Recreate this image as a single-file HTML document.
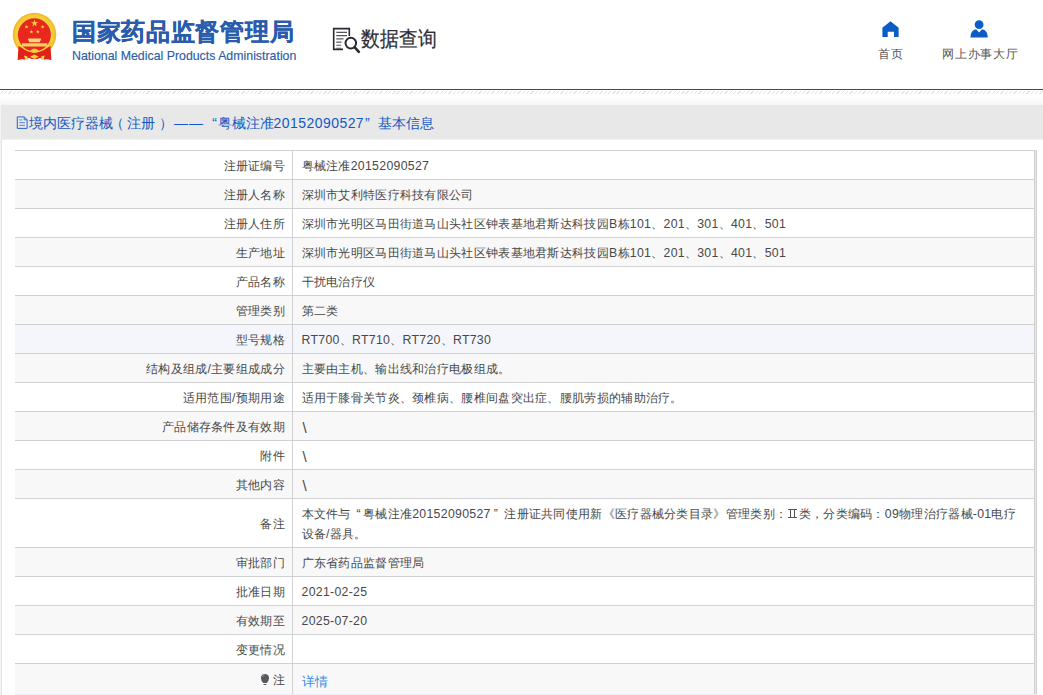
<!DOCTYPE html>
<html><head><meta charset="utf-8">
<style>
*{box-sizing:border-box}
html,body{margin:0;padding:0;background:#fff;width:1043px;height:695px;overflow:hidden}
body{font-family:"Liberation Sans",sans-serif;position:relative;color:#444}
.abs{position:absolute}
#emblem{left:10px;top:11px;width:50px;height:52px}
#t1{left:72px;top:16px;font-size:24px;font-weight:bold;color:#2a5cad;white-space:nowrap;letter-spacing:0.7px;-webkit-text-stroke:0.25px #2a5cad}
#t2{left:72px;top:49px;font-size:12.35px;color:#2a5cad;-webkit-text-stroke:0.15px #2a5cad;white-space:nowrap}
#qicon{left:332px;top:27px;width:30px;height:28px}
#qtext{left:361px;top:25px;font-size:18px;color:#2e2e36;-webkit-text-stroke:0.2px #2e2e36;white-space:nowrap;transform-origin:0 0;transform:scale(1.06,1.18)}
.nav{top:46px;font-size:12.35px;letter-spacing:0.75px;color:#555;white-space:nowrap}
#blue{left:0;top:89px;width:1043px;height:1px;background:#0057c2}
#hatch{left:0;top:90.5px;width:1043px;height:3.5px;background:repeating-linear-gradient(-45deg,#fff 0,#fff 2.1px,#e4e4e4 2.1px,#e4e4e4 3.05px)}
#grad{left:0;top:94px;width:1043px;height:11px;background:linear-gradient(#fff 25%,#f6f6f6)}
#lb0{left:0;top:105px;width:1px;height:590px;background:#f4f4f4}
#lb1{left:1px;top:139px;width:1px;height:556px;background:#e4e4e4}
#phead{left:1px;top:105px;width:1042px;height:34px;background:#e8e8e8}
#phline{left:1px;top:139px;width:1042px;height:1px;background:#eef0f6}
#ptitle{left:29px;top:115px;font-size:14px;color:#1258c4;white-space:nowrap}
#picon{left:16px;top:116px;width:13px;height:14px}
table{position:absolute;left:15px;top:150px;width:1022px;border-collapse:collapse;font-size:12.3px;letter-spacing:0.3px}
td{border-top:1px solid #d1d0d2;padding:0;height:29px;line-height:20px;vertical-align:middle;padding-top:2px}
td.l{width:277px;text-align:right;padding-right:6.5px;color:#484848;border-right:1px solid #d1d0d2}
td.v{padding-left:9px;color:#484848}
tr:nth-child(even) td{background:#f8f8f8}
tr.hov td{background:#f5f6fb}
#rb{left:1034px;top:150px;width:3px;height:545px;border-left:1px solid #cfcfcf;border-right:1px solid #cfcfcf;background:#e6e8f2}
.pl,.pr,.q1,.q2,.dash{display:inline-block}
#ptitle .pl{width:14px;text-indent:-3px}
#ptitle .pr{width:14px;text-indent:4px}
#ptitle .dash{width:34px;text-indent:5px;letter-spacing:1px}
#ptitle .q1{width:14.5px;text-align:right;padding-right:0.5px}
#ptitle .q2{width:14px;text-align:left;padding-left:1px}
.bq1{width:12.3px;text-align:right;padding-right:2px}
.bq2{width:13.5px;text-align:left;padding-left:3px}
.r2{display:inline-block;width:9px;height:9.5px;margin:0 1.5px 0 1px;border-top:1.3px solid #555;border-bottom:1.3px solid #555;background:linear-gradient(90deg,transparent 1.6px,#555 1.6px,#555 2.9px,transparent 2.9px,transparent 6.1px,#555 6.1px,#555 7.4px,transparent 7.4px);vertical-align:0}
.bs{font-size:15px;position:relative;top:1px;left:1px}
#ptitle .dg{letter-spacing:0.45px}
a{color:#3a8ee6;text-decoration:none;font-size:13px;position:relative;top:2px}
</style></head><body>
<svg class="abs" style="left:0;top:0" width="70" height="70" viewBox="0 0 70 70">
  <circle cx="34.5" cy="34.6" r="21.8" fill="#f0bc2c"/>
  <circle cx="34.5" cy="34.6" r="20" fill="#f6ca38"/>
  <path d="M18.5 46 Q34.5 56 50.5 46 L51.4 60.2 Q47 58.5 44.5 59.6 L40 58 Q34.5 60.5 29 58 L24.5 59.6 Q22 58.5 17.6 60.2 Z" fill="#e3211b"/>
  <circle cx="34.4" cy="34.8" r="17.9" fill="#f7d23a"/>
  <circle cx="34.4" cy="34.8" r="16.5" fill="#e8281e"/>
  <polygon points="34.6,19.6 35.5,22.2 38.2,22.2 36,23.8 36.8,26.4 34.6,24.8 32.4,26.4 33.2,23.8 31,22.2 33.7,22.2" fill="#f6cf3c"/>
  <polygon points="26.5,24.9 27.1,26.3 28.5,26.3 27.4,27.2 27.8,28.6 26.5,27.8 25.2,28.6 25.6,27.2 24.5,26.3 25.9,26.3" fill="#f6cf3c"/>
  <polygon points="42.6,24.9 43.2,26.3 44.6,26.3 43.5,27.2 43.9,28.6 42.6,27.8 41.3,28.6 41.7,27.2 40.6,26.3 42,26.3" fill="#f6cf3c"/>
  <polygon points="31.4,29.8 32,31.2 33.4,31.2 32.3,32.1 32.7,33.5 31.4,32.7 30.1,33.5 30.5,32.1 29.4,31.2 30.8,31.2" fill="#f6cf3c"/>
  <polygon points="37.8,29.8 38.4,31.2 39.8,31.2 38.7,32.1 39.1,33.5 37.8,32.7 36.5,33.5 36.9,32.1 35.8,31.2 37.2,31.2" fill="#f6cf3c"/>
  <path d="M28.5 38.4 H40.8 L41.4 40.4 H40 V42.2 H29 V40.4 H27.7 Z" fill="#f8d77a"/>
  <path d="M21.7 43.2 H47.4 L46.8 46.5 H22.3 Z" fill="#f6d35e"/>
  <path d="M30 51.5 Q31.5 48.8 34.5 48.6 Q37.5 48.8 39 51.5 L34.5 53 Z" fill="#f5cd3a"/>
  <path d="M30 56.8 L34.5 54.5 L38.5 56.8 L34.5 59 Z" fill="#f5d040"/>
  <path d="M24 55.5 L27.5 56.5 L27.8 60 L25 59 Z M44.8 55.5 L41.2 56.5 L41 60 L43.8 59 Z" fill="#f5d040"/>
</svg>
<div id="t1" class="abs">国家药品监督管理局</div>
<div id="t2" class="abs">National Medical Products Administration</div>
<svg class="abs" style="left:330px;top:25px" width="32" height="32" viewBox="330 25 32 32">
  <path d="M349.3 36 V28.6 H333.7 V49.4 H343" fill="none" stroke="#2a2a35" stroke-width="1.6"/>
  <path d="M336.3 32.4 H347 M336.3 35.6 H347 M336.3 38.9 H343.5 M336.3 42.1 H341.5 M336.3 45.3 H341 M336.3 48.3 H341" stroke="#55555e" stroke-width="1.1"/>
  <circle cx="350.8" cy="43.1" r="5.3" fill="#fff" stroke="#2a2a35" stroke-width="2"/>
  <path d="M354.6 47.2 L358.8 51.8" stroke="#2a2a35" stroke-width="2.6" stroke-linecap="round"/>
</svg>
<div id="qtext" class="abs">数据查询</div>
<svg class="abs" style="left:880px;top:19px" width="21" height="20" viewBox="880 19 21 20"><path d="M890.5 21.2 L898.6 27.8 V37 H894 V31.7 H887.7 V37 H882.4 V27.8 Z" fill="#0b5cc4"/></svg>
<div class="abs nav" style="left:878px">首页</div>
<svg class="abs" style="left:968px;top:18px" width="22" height="22" viewBox="968 18 22 22"><circle cx="979.1" cy="24.7" r="4.4" fill="#0b5cc4"/><path d="M970.4 37.5 Q970.6 30.2 976.2 29.3 L979.1 32.6 L982 29.3 Q987.6 30.2 987.8 37.5 Z" fill="#0b5cc4"/></svg>
<div class="abs nav" style="left:942px">网上办事大厅</div>
<div id="blue" class="abs"></div>
<div id="hatch" class="abs"></div>
<div id="grad" class="abs"></div>
<div id="lb0" class="abs"></div>
<div id="phead" class="abs"></div>
<div id="phline" class="abs"></div>
<div id="lb1" class="abs"></div>
<svg class="abs" style="left:14px;top:114px" width="16" height="17" viewBox="14 114 16 17"><path d="M17.3 116.9 H24.2 L27.1 119.8 V128.4 H17.3 Z" fill="none" stroke="#2a62c8" stroke-width="1"/><path d="M24.2 116.9 V119.8 H27.1" fill="none" stroke="#2a62c8" stroke-width="0.9"/><path d="M19.3 119.9 H22.2 M19.3 122.6 H25 M19.3 125.3 H25" stroke="#4a7fd6" stroke-width="0.9"/></svg>
<div id="ptitle" class="abs">境内医疗器械<span class="pl">（</span>注册<span class="pr">）</span><span class="dash">——</span><span class="q1">“</span>粤械注准<span class="dg">20152090527</span><span class="q2">”</span>基本信息</div>
<table>
<tr><td class="l">注册证编号</td><td class="v">粤械注准20152090527</td></tr>
<tr><td class="l">注册人名称</td><td class="v">深圳市艾利特医疗科技有限公司</td></tr>
<tr><td class="l">注册人住所</td><td class="v">深圳市光明区马田街道马山头社区钟表基地君斯达科技园B栋101、201、301、401、501</td></tr>
<tr><td class="l">生产地址</td><td class="v">深圳市光明区马田街道马山头社区钟表基地君斯达科技园B栋101、201、301、401、501</td></tr>
<tr><td class="l">产品名称</td><td class="v">干扰电治疗仪</td></tr>
<tr><td class="l">管理类别</td><td class="v">第二类</td></tr>
<tr class="hov"><td class="l">型号规格</td><td class="v">RT700、RT710、RT720、RT730</td></tr>
<tr><td class="l">结构及组成/主要组成成分</td><td class="v">主要由主机、输出线和治疗电极组成。</td></tr>
<tr><td class="l">适用范围/预期用途</td><td class="v">适用于膝骨关节炎、颈椎病、腰椎间盘突出症、腰肌劳损的辅助治疗。</td></tr>
<tr><td class="l">产品储存条件及有效期</td><td class="v"><span class="bs">\</span></td></tr>
<tr><td class="l">附件</td><td class="v"><span class="bs">\</span></td></tr>
<tr><td class="l">其他内容</td><td class="v"><span class="bs">\</span></td></tr>
<tr><td class="l" style="height:49px">备注</td><td class="v">本文件与<span class="q1 bq1">“</span>粤械注准20152090527<span class="q2 bq2">”</span>注册证共同使用新《医疗器械分类目录》管理类别：<span class="r2"></span>类，分类编码：09物理治疗器械-01电疗<br>设备/器具。</td></tr>
<tr><td class="l">审批部门</td><td class="v">广东省药品监督管理局</td></tr>
<tr><td class="l">批准日期</td><td class="v">2021-02-25</td></tr>
<tr><td class="l">有效期至</td><td class="v">2025-07-20</td></tr>
<tr><td class="l">变更情况</td><td class="v"></td></tr>
<tr><td class="l" style="height:31px">注</td><td class="v"><a>详情</a></td></tr>
</table>
<div id="rb" class="abs"></div>
<div class="abs" style="left:15px;top:694px;width:1022px;height:1px;background:#eceef7"></div>
<svg class="abs" style="left:258px;top:671px" width="14" height="16" viewBox="258 671 14 16"><path d="M265 673.9 A4.05 4.05 0 0 1 269.05 678 Q269.05 680.6 266.7 682.9 H263.3 Q260.95 680.6 260.95 678 A4.05 4.05 0 0 1 265 673.9 Z" fill="#58585e"/><path d="M262.6 677 Q263 675.3 264.6 674.8" stroke="#9aa0b0" stroke-width="0.8" fill="none"/><rect x="263.6" y="684" width="2.8" height="1" fill="#58585e"/></svg>
</body></html>
